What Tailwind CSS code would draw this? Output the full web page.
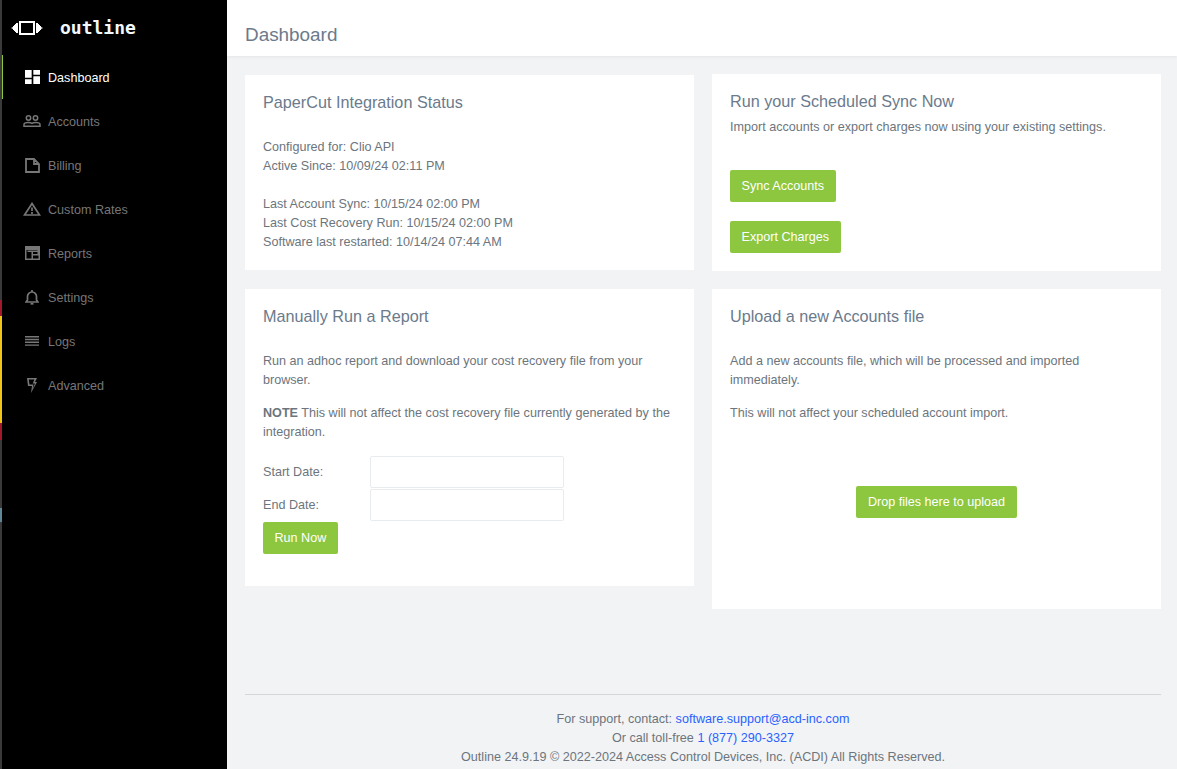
<!DOCTYPE html>
<html lang="en">
<head>
  <meta charset="UTF-8" />
  <title>Dashboard</title>
  <script src="https://cdn.jsdelivr.net/npm/@tailwindcss/browser@4"></script>
</head>
<body class="h-[769px] overflow-hidden bg-[#f2f3f5] font-['Liberation_Sans',Arial,sans-serif] text-[12.6px] leading-[19px] text-[#6c757d]">
  <div class="flex h-[769px]">

    <!-- Sidebar -->
    <aside class="relative w-[227px] shrink-0 bg-black pl-[2px]">
      <!-- strip of the window behind -->
      <div class="absolute left-0 top-0 flex h-full w-[2px] flex-col bg-[#3a3a3a]">
        <div class="h-[300px]"></div>
        <div class="h-[16px] bg-[#a3182c]"></div>
        <div class="h-[107px] bg-[#f2c31a]"></div>
        <div class="h-[17px] bg-[#a3182c]"></div>
        <div class="mt-[68px] h-[14px] bg-[#5f8798]"></div>
      </div>

      <div class="flex h-[55px] items-center pl-[9px]">
        <svg class="h-[16px] w-[32px] text-white" viewBox="0 0 32 16" fill="currentColor">
          <path d="M0 8l2-1V6h1V5h1V4h1V3h2v10H5v-1H4v-1H3v-1H2V9z" />
          <path d="M32 8l-2-1V6h-1V5h-1V4h-1V3h-2v10h2v-1h1v-1h1v-1h1V9z" />
          <path fill-rule="evenodd" d="M8 1h16v14H8zM10 3v10h12V3z" />
        </svg>
        <span class="ml-[17px] font-['DejaVu_Sans_Mono',monospace] text-[18px] leading-[20px] font-bold text-[#f2f8ff]">outline</span>
      </div>

      <nav>
        <a class="flex h-[44px] items-center border-l border-[#8dc63f] pl-[20px] text-white">
          <span class="flex w-[18px] justify-center">
            <svg class="h-[14px] w-[15px]" viewBox="3 3 18 18" preserveAspectRatio="none" fill="currentColor">
              <path d="M13 3v6h8V3m-8 18h8V11h-8M3 21h8v-6H3m0-2h8V3H3z" />
            </svg>
          </span>
          <span class="ml-[7px] mt-[2px]">Dashboard</span>
        </a>
        <a class="flex h-[44px] items-center pl-[21px] text-[#777]">
          <span class="flex w-[18px] justify-center">
            <svg class="h-[12px] w-[18px]" viewBox="0 0 18 12" fill="none" stroke="currentColor" stroke-width="1.500">
              <circle cx="5.500" cy="3" r="2.200" />
              <circle cx="12.500" cy="3" r="2.200" />
              <path d="M1 11.200V9.500c0-1.200 2.500-2 4.500-2 1.500 0 2.800.3 3.500.8.700-.5 2-.8 3.500-.8 2 0 4.500.8 4.500 2v1.700z" />
            </svg>
          </span>
          <span class="ml-[7px] mt-[2px]">Accounts</span>
        </a>
        <a class="flex h-[44px] items-center pl-[21px] text-[#777]">
          <span class="flex w-[18px] justify-center">
            <svg class="h-[15px] w-[15px]" viewBox="0 0 15 15" fill="none" stroke="currentColor" stroke-width="1.800">
              <path d="M1 1h8l5 5v8H1zM9 1v5h5" />
            </svg>
          </span>
          <span class="ml-[7px] mt-[2px]">Billing</span>
        </a>
        <a class="flex h-[44px] items-center pl-[21px] text-[#777]">
          <span class="flex w-[18px] justify-center">
            <svg class="h-[14px] w-[18px]" viewBox="0 0 18 14" fill="none" stroke="currentColor" stroke-width="1.700">
              <path d="M9 1.500L16.500 13h-15z" />
              <path d="M9 5.500v3.500M9 10v2" />
            </svg>
          </span>
          <span class="ml-[7px] mt-[2px]">Custom Rates</span>
        </a>
        <a class="flex h-[44px] items-center pl-[21px] text-[#777]">
          <span class="flex w-[18px] justify-center">
            <svg class="h-[14px] w-[15px]" viewBox="0 0 15 14" fill="currentColor">
              <path fill-rule="evenodd" d="M0 0h15v14H0zM1.500 4v8.500h5V6H2.500V4.500h10V4zM8 6v2h4.500V6zM8 9.500v3h5.500v-3z" />
            </svg>
          </span>
          <span class="ml-[7px] mt-[2px]">Reports</span>
        </a>
        <a class="flex h-[44px] items-center pl-[21px] text-[#777]">
          <span class="flex w-[18px] justify-center">
            <svg class="h-[15px] w-[14px]" viewBox="0 0 14 15" fill="none" stroke="currentColor" stroke-width="1.700">
              <path d="M1 12h12l-1.500-2V6.500a4.500 4.500 0 0 0-9 0V10z" />
              <path d="M7 0v2" />
              <path d="M5.500 13.800h3" />
            </svg>
          </span>
          <span class="ml-[7px] mt-[2px]">Settings</span>
        </a>
        <a class="flex h-[44px] items-center pl-[21px] text-[#777]">
          <span class="flex w-[18px] justify-center">
            <svg class="h-[10px] w-[14px]" viewBox="0 0 14 10" fill="currentColor">
              <path d="M0 0h14v1.400H0zM0 2.800h14v1.400H0zM0 5.600h14V7H0zM0 8.400h14v1.400H0z" />
            </svg>
          </span>
          <span class="ml-[7px] mt-[2px]">Logs</span>
        </a>
        <a class="flex h-[44px] items-center pl-[21px] text-[#777]">
          <span class="flex w-[18px] justify-center">
            <svg class="h-[15px] w-[10px]" viewBox="0 0 10 15" fill="currentColor">
              <path fill-rule="evenodd" d="M0 0h10L8 4h2L4 15l1-7H1zM1.800 1.500l.7 5h4L5.600 11 8 5.500H5.700l1.700-4z" />
            </svg>
          </span>
          <span class="ml-[7px] mt-[2px]">Advanced</span>
        </a>
      </nav>
    </aside>

    <!-- Main -->
    <div class="flex min-w-0 flex-1 flex-col">
      <header class="flex h-[56px] shrink-0 items-center bg-white pl-[18px] pt-[13px] shadow-[0_1px_3px_rgba(0,0,0,0.06)]">
        <h1 class="text-[18.9px] leading-[24px] text-[#6b7a8c]">Dashboard</h1>
      </header>

      <main class="flex flex-1 flex-col pl-[18px] pr-[16px] pt-[18px]">
        <div class="flex gap-[18px]">

          <!-- Left column -->
          <div class="flex w-[449px] flex-col gap-[19px] pt-[1px]">
            <section class="h-[195px] bg-white px-[18px] pt-[18px]">
              <h2 class="text-[16.2px] leading-[18px] text-[#6b7a8c]">PaperCut Integration Status</h2>
              <p class="mt-[27px]">Configured for: Clio API<br />Active Since: 10/09/24 02:11 PM</p>
              <p class="mt-[19px]">Last Account Sync: 10/15/24 02:00 PM<br />Last Cost Recovery Run: 10/15/24 02:00 PM<br />Software last restarted: 10/14/24 07:44 AM</p>
            </section>

            <section class="h-[297px] bg-white px-[18px] pt-[18px]">
              <h2 class="text-[16.2px] leading-[18px] text-[#6b7a8c]">Manually Run a Report</h2>
              <p class="mt-[27px]">Run an adhoc report and download your cost recovery file from your browser.</p>
              <p class="mt-[14px]"><b>NOTE</b> This will not affect the cost recovery file currently generated by the integration.</p>
              <div class="mt-[14px] flex items-center">
                <label class="w-[107px]">Start Date:</label>
                <input class="h-[32px] w-[194px] rounded-[2px] border border-[#e9ecef] bg-white" />
              </div>
              <div class="mt-[1px] flex items-center">
                <label class="w-[107px]">End Date:</label>
                <input class="h-[32px] w-[194px] rounded-[2px] border border-[#e9ecef] bg-white" />
              </div>
              <button class="mt-[1px] h-[32px] rounded-[2px] bg-[#8dc63f] px-[11.5px] text-white">Run Now</button>
            </section>
          </div>

          <!-- Right column -->
          <div class="flex w-[449px] flex-col gap-[18px]">
            <section class="h-[197px] bg-white px-[18px] pt-[18px]">
              <h2 class="text-[16.2px] leading-[18px] text-[#6b7a8c]">Run your Scheduled Sync Now</h2>
              <p class="mt-[8px]">Import accounts or export charges now using your existing settings.</p>
              <button class="mt-[33px] block h-[32px] rounded-[2px] bg-[#8dc63f] px-[11.5px] text-white">Sync Accounts</button>
              <button class="mt-[19px] block h-[32px] rounded-[2px] bg-[#8dc63f] px-[11.5px] text-white">Export Charges</button>
            </section>

            <section class="h-[320px] bg-white px-[18px] pt-[18px]">
              <h2 class="text-[16.2px] leading-[18px] text-[#6b7a8c]">Upload a new Accounts file</h2>
              <p class="mt-[27px]">Add a new accounts file, which will be processed and imported immediately.</p>
              <p class="mt-[14px]">This will not affect your scheduled account import.</p>
              <div class="mt-[63px] flex justify-center">
                <button class="h-[32px] rounded-[2px] bg-[#8dc63f] px-[12px] text-white">Drop files here to upload</button>
              </div>
            </section>
          </div>
        </div>

        <footer class="mt-[85px] border-t border-[#d5d6d8] pt-[15px] text-center">
          <p>For support, contact: <a class="text-[#2962ff]">software.support@acd-inc.com</a></p>
          <p>Or call toll-free <a class="text-[#2962ff]">1 (877) 290-3327</a></p>
          <p>Outline 24.9.19 © 2022-2024 Access Control Devices, Inc. (ACDI) All Rights Reserved.</p>
        </footer>
      </main>
    </div>
  </div>
</body>
</html>
